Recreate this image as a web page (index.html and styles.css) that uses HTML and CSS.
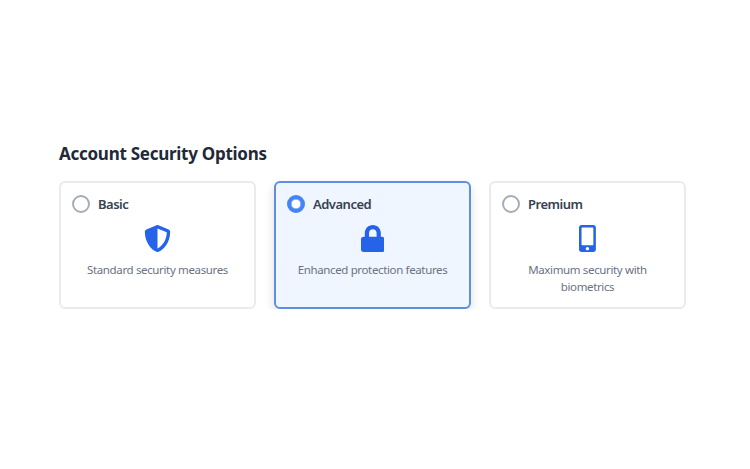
FILE: index.html
```html
<!DOCTYPE html>
<html lang="en">
<head>
	<meta charset="UTF-8">
	<title>Account Security Options</title>
	<link rel="stylesheet" href="styles.css">
</head>
<body>
<div class="wrap">
	<h2 class="title">Account Security Options</h2>
	<div class="options">
		<div class="card">
			<div class="head">
				<span class="radio"></span>
				<span class="label">Basic</span>
			</div>
			<svg class="icon" viewBox="0 0 512 512">
				<path d="M466.500 83.700l-192-80a48 48 0 0 0-36.900 0l-192 80C27.700 91.100 16 108.600 16 128c0 198.500 114.500 335.700 221.500 380.300 11.800 4.900 25.100 4.900 36.900 0C360.100 472.600 496 349.300 496 128c0-19.400-11.700-36.900-29.500-44.300zM256.100 446.300l-.1-381 175.900 73.300c-3.300 151.400-82.100 261.100-175.800 307.700z"/>
			</svg>
			<p class="desc">Standard security measures</p>
		</div>
		<div class="card active">
			<div class="head">
				<span class="radio"></span>
				<span class="label">Advanced</span>
			</div>
			<svg class="icon" viewBox="0 0 448 512">
				<path d="M400 224h-24v-72C376 68.200 307.800 0 224 0S72 68.200 72 152v72H48c-26.500 0-48 21.500-48 48v192c0 26.500 21.500 48 48 48h352c26.500 0 48-21.500 48-48V272c0-26.500-21.500-48-48-48zm-104 0H152v-72c0-39.700 32.300-72 72-72s72 32.300 72 72v72z"/>
			</svg>
			<p class="desc">Enhanced protection features</p>
		</div>
		<div class="card">
			<div class="head">
				<span class="radio"></span>
				<span class="label">Premium</span>
			</div>
			<svg class="icon" viewBox="0 0 320 512">
				<path d="M272 0H48C21.500 0 0 21.500 0 48v416c0 26.500 21.500 48 48 48h224c26.500 0 48-21.500 48-48V48c0-26.500-21.500-48-48-48zM160 480c-17.700 0-32-14.300-32-32s14.300-32 32-32 32 14.300 32 32-14.300 32-32 32zm112-108c0 6.600-5.400 12-12 12H60c-6.600 0-12-5.400-12-12V60c0-6.600 5.400-12 12-12h200c6.600 0 12 5.400 12 12v312z"/>
			</svg>
			<p class="desc">Maximum security with biometrics</p>
		</div>
	</div>
</div>
</body>
</html>
```
FILE: styles.css
```css
*{
	box-sizing: border-box;
}
body{
	margin: 0;
	background-color: #fff;
	font-family: "Noto Sans", "Open Sans", sans-serif;
}
.wrap{
	width: 627px;
	margin: 0 auto 0 59px;
	padding-top: 141px;
}
.title{
	margin: 0 0 15px;
	font-size: 17px;
	line-height: 25px;
	font-weight: 700;
	letter-spacing: -.27px;
	color: #1f2937;
	white-space: nowrap;
}
.options{
	display: grid;
	grid-template-columns: repeat(3, 1fr);
	gap: 18px;
}
.card{
	height: 128px;
	padding: 11px;
	border: 2px solid #e9ebee;
	border-radius: 6px;
}
.card.active{
	border-color: #5d8fe2;
	background-color: #eff6ff;
	box-shadow: 0 5px 11px rgba(0,0,0,.13);
}
.head{
	display: flex;
	align-items: center;
	height: 20px;
}
.radio{
	width: 18px;
	height: 18px;
	margin-right: 8px;
	border: 2px solid #a7adb8;
	border-radius: 50%;
}
.active .radio{
	border: 4px solid #4385f4;
	background-color: #fff;
	box-shadow: inset 0 0 0 .5px #4385f4;
}
.label{
	font-size: 13px;
	line-height: 20px;
	font-weight: 600;
	letter-spacing: -.5px;
	color: #374151;
}
.icon{
	display: block;
	height: 27px;
	margin: 11px auto 0;
	fill: #2563eb;
}
.desc{
	margin: 9px 0 0;
	font-size: 11.5px;
	line-height: 17px;
	letter-spacing: -.36px;
	text-align: center;
	color: #6b7280;
}
```
